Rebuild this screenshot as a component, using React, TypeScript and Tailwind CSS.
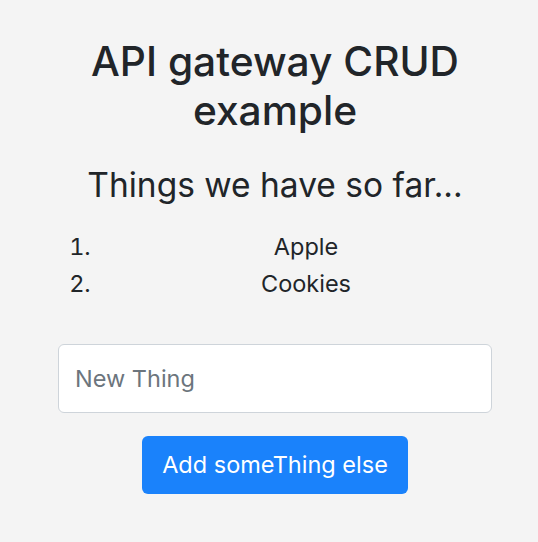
export default function App() {
  return (
    <div className="min-h-[542px] w-full bg-[#f4f4f4] text-[#212529]" style={{ fontFamily: "Inter, 'Noto Sans', sans-serif" }}>
      <div className="ml-[58px] w-[434px] pt-[37px]">
        <h1 className="text-center text-[40.7px] leading-[49px] font-medium">API gateway CRUD example</h1>
        <h2 className="mt-[30px] text-center text-[33.5px] leading-[40px] font-normal">Things we have so far...</h2>
        <ol className="mt-[27px] list-decimal pl-[39px] text-[23.5px] leading-[29px]">
          <li className="mb-[8px] pl-[23px] text-center">Apple</li>
          <li className="mb-[8px] pl-[23px] text-center">Cookies</li>
        </ol>
        <input
          className="mt-[46px] block h-[69px] w-[434px] rounded-[6px] border border-[#ced4da] bg-white px-4 text-[23.5px] placeholder:text-[#6c757d] outline-none"
          placeholder="New Thing"
        />
        <div className="mt-[23px] flex justify-center">
          <button className="h-[58px] w-[266px] rounded-[6px] bg-[#1a82fb] text-[23.5px] text-white">Add someThing else</button>
        </div>
      </div>
    </div>
  );
}
